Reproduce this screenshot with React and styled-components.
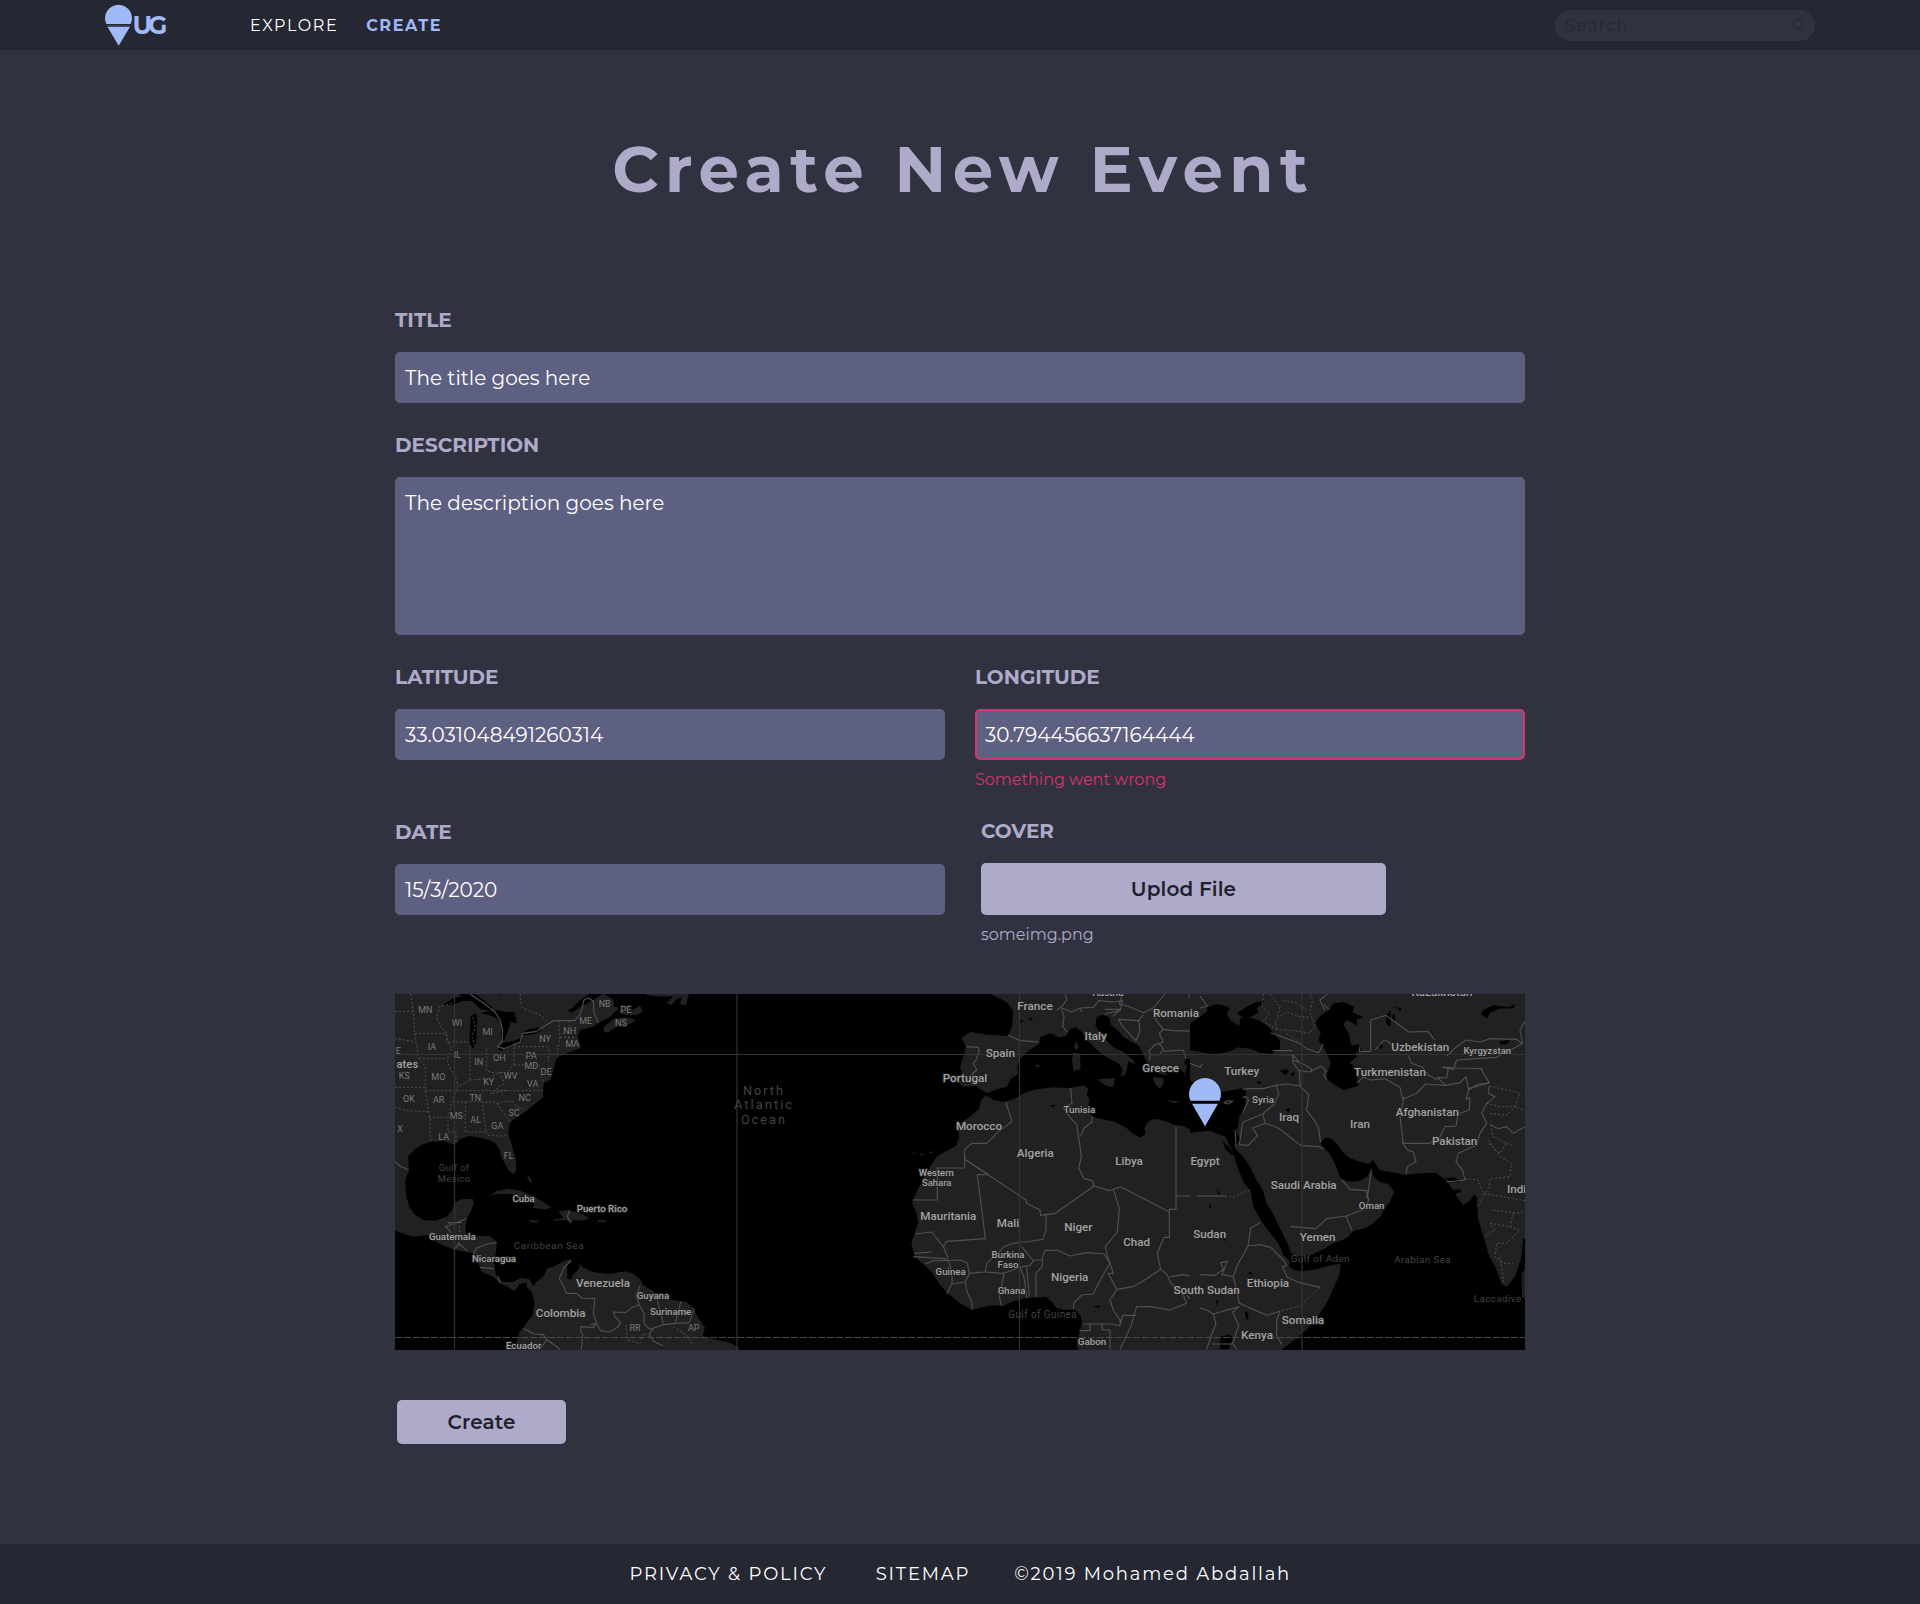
import React from 'react';
import styled, { createGlobalStyle } from 'styled-components';

const GlobalStyle = createGlobalStyle`
  *, *::before, *::after { box-sizing: border-box; }
  body {
    margin: 0;
    background: #31323f;
    font-family: Montserrat, Inter, 'Liberation Sans', sans-serif;
  }
`;

const Page = styled.div`
  display: flex;
  flex-direction: column;
  min-height: 1604px;
  background: #31323f;
`;

const Header = styled.header`
  display: flex;
  align-items: center;
  height: 50px;
  padding: 0 105px;
  background: #252733;
`;

const Brand = styled.a`
  display: flex;
  align-items: center;
  width: 145px;
  height: 50px;
  color: #9fbaf7;
`;

const BrandMark = styled.svg`
  width: 27px;
  height: 42px;
  fill: #9fbaf7;
`;

const BrandName = styled.span`
  margin-left: 0.6px;
  font-size: 25px;
  font-weight: 700;
  letter-spacing: -4.4px;
  line-height: 50px;
`;

const Nav = styled.nav`
  display: flex;
  gap: 28px;
`;

const NavLink = styled.a`
  padding-top: 1px;
  font-size: 16px;
  line-height: 50px;
  letter-spacing: 0.1em;
  font-weight: ${(p) => (p.$active ? 700 : 400)};
  color: ${(p) => (p.$active ? '#9fbaf7' : '#ffffff')};
`;

const SearchBox = styled.div`
  display: flex;
  align-items: center;
  justify-content: space-between;
  width: 260px;
  height: 31px;
  margin-left: auto;
  padding: 0 8px 0 10px;
  border-radius: 16px;
  background: #31323f;
  color: #252733;
`;

const SearchText = styled.span`
  font-size: 16px;
  font-weight: 400;
  letter-spacing: 0.1em;
`;

const SearchIcon = styled.svg`
  width: 15px;
  height: 15px;
  fill: none;
  stroke: #252733;
  stroke-width: 1;
`;

const Main = styled.main`
  width: 1130px;
  margin: 0 auto;
`;

const Title = styled.h1`
  margin: 79px 0 99px;
  padding-left: 6.4px;
  text-align: center;
  font-size: 64px;
  font-weight: 700;
  line-height: 80px;
  letter-spacing: 0.1em;
  color: #aeaaca;
`;

const Form = styled.form`
  display: flex;
  flex-direction: column;
`;

const Field = styled.div`
  display: flex;
  flex-direction: column;
  padding-top: ${(p) => p.$nudge || 0}px;
  padding-left: ${(p) => p.$inset || 0}px;
`;

const FieldBlock = styled(Field)`
  margin-bottom: 30px;
`;

const Row = styled.div`
  display: grid;
  grid-template-columns: 1fr 1fr;
  column-gap: 30px;
`;

const Label = styled.label`
  margin-bottom: 20px;
  font-size: 20px;
  font-weight: 700;
  line-height: 24px;
  color: #aeaaca;
`;

const Input = styled.input`
  width: 100%;
  height: 51px;
  padding: 0 ${(p) => (p.$invalid ? 8 : 10)}px;
  border: ${(p) => (p.$invalid ? '2px solid #d8336b' : '0')};
  border-radius: 5px;
  outline: none;
  background: #5d6080;
  color: #ffffff;
  font-family: inherit;
  font-size: 20px;
`;

const TextArea = styled.textarea`
  display: block;
  width: 100%;
  height: 158px;
  padding: 14px 10px;
  border: 0;
  border-radius: 5px;
  outline: none;
  resize: none;
  background: #5d6080;
  color: #ffffff;
  font-family: inherit;
  font-size: 20px;
  line-height: 24px;
`;

const Hint = styled.span`
  margin-top: 10px;
  font-size: 16px;
  font-weight: 400;
  line-height: 20px;
  color: ${(p) => (p.$error ? '#d8336b' : '#aeaaca')};
`;

const ErrorHint = styled(Hint)`
  margin-bottom: 29px;
`;

const Button = styled.button`
  width: ${(p) => p.$width}px;
  height: ${(p) => p.$height}px;
  padding: 0;
  border: 0;
  border-radius: 5px;
  background: #aeaaca;
  color: #1f1f2b;
  font-family: inherit;
  font-size: 20px;
  font-weight: 600;
  letter-spacing: 0.12px;
`;

const SubmitButton = styled(Button)`
  margin-left: 2px;
`;

const MapFrame = styled.div`
  width: 1130px;
  height: 356px;
  margin: 49px 0 50px;
  overflow: hidden;
  background: #000000;
`;

const MapSvg = styled.svg`
  display: block;
  width: 1130px;
  height: 356px;
  font-family: Roboto, sans-serif;

  .land { fill: #212121; }
  .sea { fill: #000000; }
  .border { fill: none; stroke: #505050; stroke-width: 3.4; stroke-linejoin: round; }
  .state { fill: none; stroke: #505050; stroke-width: 3; stroke-dasharray: 6 6; }
  .grid { fill: none; stroke: #333333; stroke-width: 1.2; }
  .equator { stroke: #484848; stroke-dasharray: 7 2; }
  .pin { fill: #9fbaf7; }
`;

const MapLabel = styled.text`
  font-size: ${(p) => p.$size}px;
  font-weight: ${(p) => (p.$tone === 'country' ? 500 : 400)};
  letter-spacing: ${(p) => p.$track || 0}px;
  text-anchor: middle;
  fill: ${(p) => ({ country: '#a2a2a2', state: '#7a7a7a', water: '#444444' })[p.$tone]};
  stroke: ${(p) => (p.$tone === 'water' ? 'none' : '#212121')};
  stroke-width: 5px;
  paint-order: stroke;
`;

const Footer = styled.footer`
  display: flex;
  align-items: center;
  height: 60px;
  margin-top: 100px;
  padding-left: 629.5px;
  background: #252733;
  color: #ffffff;
  font-size: 18px;
`;

const FooterItem = styled.span`
  margin-right: ${(p) => p.$gap || 0}px;
  letter-spacing: 0.1em;
  line-height: 60px;
  white-space: nowrap;
`;

/* Each region is drafted at three times its size on the page. */
const americas = {
  shift: 'translate(-15 -14) scale(0.33333)',
  land: [
    'M30 30H640L620 48L598 62L580 82L562 92L575 98L600 82L640 60L668 42H672L700 60L702 80L718 84L700 100L690 112L655 128L640 140L600 150L592 170L600 190L602 204L580 212L550 224L530 234L522 262L512 300L492 308L488 330L490 352L462 374L440 392L410 412L390 428L385 460L398 505L408 540L408 575L398 582L385 570L366 535L358 508L345 488L325 480L300 473L268 468L240 478L225 494L190 484L150 486L125 494L105 508L85 528L86 570L76 600L78 645L88 680L102 702L130 720L165 722L200 710L218 690L222 668L245 658L278 656L282 668L274 690L262 714L256 740L258 764L290 768L330 768L350 785L348 815L342 850L348 885L366 905L398 906L425 893L448 898L462 920L466 908L492 888L500 866L530 856L552 842L572 838L576 846L560 856L562 876L576 888L596 868L600 852L608 862L640 876L690 882L735 874L758 880L780 898L790 916L820 934L850 958L880 960L920 966L942 986L952 1010L975 1042L968 1068L1000 1078L1050 1088L1078 1104V1115H400L412 1080L418 1056L440 1030L458 1005L464 965L455 935L442 924L438 908L418 912L404 934L385 922L358 908L340 890L306 876L300 862L290 835L278 820L225 810L180 792L142 766L100 770L45 752H30Z',
    'M712 92L745 96L770 84L780 76L788 94L770 106L735 104Z',
    'M672 140L700 118L735 112L768 120L750 132L715 138L682 158L670 154Z',
    'M330 648L350 632L385 626L420 632L455 646L485 664L514 682L500 688L460 684L462 668L430 652L390 642L350 642Z',
    'M535 694L565 690L600 700L628 714L610 722L580 720L572 732L560 720L520 722L522 718L550 714Z',
    'M446 720L478 722L470 728L450 726Z',
    'M652 720L680 721L674 727L652 726Z',
    'M440 585L450 592L456 610L448 606Z',
    'M800 30H930L918 76L900 72L905 50L890 58L875 74L860 70L880 48L845 50L800 46Z',
  ],
  sea: [
    'M188 76L215 56L245 48L232 38H282L300 52L340 84L330 92L300 86L278 64L250 62L220 74Z',
    'M272 108L288 100L292 120L288 190L280 206L268 192L270 150Z',
    'M300 100L325 94L352 90L376 96L402 96L412 130L392 125L385 150L372 180L362 176L366 140L352 116L325 104Z',
    'M352 204L370 188L398 184L428 172L424 184L392 200L362 212Z',
    'M424 160L440 150L476 142L484 152L462 162L432 166Z',
    'M345 30H372L360 46Z',
    'M562 872L578 876L576 898L562 896Z',
  ],
  border: [
    'M270 42L320 76L345 96L360 120L368 150L366 185L352 200L372 206L420 186L428 160L470 154L490 140L520 122H585L602 100L612 60L625 54L640 64L642 100L656 128',
    'M45 545L60 558L86 570', 'M204 738L228 728L258 716', 'M204 738H196L214 758M206 732V728H244M222 808L238 792L262 812M238 792L232 790M280 820L290 804L322 792L350 788', 'M300 862L342 866', 'M355 890L360 910',
    'M572 842L550 866L538 896L552 920L558 940H590L605 954L645 956L640 1000L650 1030L640 1042L602 1040V1052L608 1064L604 1108',
    'M650 1030L662 1052L688 1056L712 1042L722 1028L705 1010L700 996L736 998L756 982L778 974L768 948L780 918',
    'M778 974L792 1000V1030L810 1048L850 1034L886 1030L928 1028L942 986M850 1034L842 1000L832 962M886 1030L902 966',
    'M432 1046L462 1062L490 1064L502 1080L540 1108M490 1064L500 1080L480 1108', 'M568 692L562 710L572 726',
    'M820 1046L808 1062L820 1084L850 1098M650 1030L632 1034',
  ],
  state: [
    'M92 42L100 95L104 160L116 235L136 262V330L146 395L152 420L148 450L154 486', 'M45 95H98M104 160H198L206 186H270', 'M215 70L180 80L170 110L180 138L198 155L202 185L216 205L200 240L212 270L226 290L234 318L222 350L212 380L204 410V456H228V490', 'M116 235H196M45 176L100 184', 'M45 322H136M136 332H490M220 366H350', 'M45 382L80 392L146 395M146 412H204', 'M270 196V300L234 320M320 206V274L350 280L332 296L270 300M402 190V250L380 280L360 276L350 280',
    'M402 200H500L512 218L502 238L510 250', 'M402 255H478L484 290L490 306M360 276L372 310L330 342L380 330', 'M420 42L425 80L445 92L480 105L500 122M536 122L540 170L530 230M568 122V164L560 200M540 172H590', 'M256 366V456H318L306 366M318 456L324 466L360 468L382 464M350 370L378 410L392 428M350 370L395 362L410 380L436 390', 'M238 738V790M738 1034L742 1080L780 1090L790 1060L808 1070M880 1040L925 1070L938 1094',
    'M278 112L286 140L276 170L284 196',
  ],
};

const africaEurope = {
  shift: 'translate(485 -14) scale(0.33333)',
  land: [
    'M335 30H1000V100L985 108L965 135L948 160L942 190L945 206L960 214L1000 228V470L985 455L960 458L930 448L910 438L885 434L862 426L835 418H818L800 428L794 446L796 462L780 473L756 458L735 440L700 424L660 416L640 410L628 400L622 380L630 362L620 345L626 328L612 316L590 320L565 324L520 322L480 326L440 335L400 358L370 366L340 360L318 346L305 358L296 388L270 410L242 428L234 446L238 474L228 498L205 510L172 528L150 560L128 600L108 640L96 668L110 700L114 730L104 760L94 790L104 830L134 856L155 876L178 912L206 942L240 970L275 990L310 980L340 976L370 978L400 964L440 954L498 950L516 966L530 984L555 990L585 988L602 1008L606 1030L598 1060L590 1090L594 1115H1000V30L940 240L918 236L912 250L922 258L914 285L926 300L910 276L880 256L850 272L866 286L840 282L816 262L800 246L786 216L775 196L756 186L732 172L712 150L692 134L688 112L668 104L650 112L646 136L660 160L688 190L700 202L730 216L760 240L764 252L745 244L742 262L736 284L722 290L728 270L716 250L680 232L650 210L622 180L605 155L586 142L568 150L558 168L535 172L510 160L480 172L478 192L445 212L420 236L412 262L414 282L392 298L380 320L350 328L322 340L304 330L288 318L252 320L240 312L246 280L240 262L250 230L258 200L244 174L270 156L320 164L385 168L396 140L400 92L380 66L335 44Z',
    'M590 182L596 200L590 212L582 200Z', 'M580 216L600 222L602 268L580 272L576 238Z', 'M655 298L705 294L700 322L680 318L658 304Z', 'M818 292L850 294L852 308L840 326L825 312Z', 'M862 360L905 366L880 370Z', 'M465 254L482 256L472 264Z', 'M98 516L108 520L98 522M122 520L134 526L120 526M148 514L160 516L150 522Z',
  ],
  sea: ['M415 120L432 122L420 128Z', 'M445 118L460 112L452 122Z', 'M510 376L528 374L520 382Z', 'M640 980L662 976L656 984Z'],
  border: [
    'M385 166L420 182L476 186', 'M258 200L295 202L298 214L288 240L280 250L290 270L276 282L278 310', 'M530 90L545 80L560 60L556 44M545 84L575 96L600 84L640 82L656 62L700 66L728 62L720 92L674 102', 'M545 88L552 110L548 140L562 156', 'M600 84L606 96M728 42L718 72L748 80L790 98L820 84L840 60L855 42M674 88H720L700 108M715 118L776 122L780 152L768 182L728 140Z', 'M776 122L790 104M820 84L828 120L850 148L838 160L850 186L822 196L806 214L812 224H840L850 206L838 190L820 196M850 148L880 152L950 154M812 224L808 240M850 214L910 210L918 236M925 42L940 80L960 104L975 80L968 42',
    'M572 324L576 370L550 382L568 410L590 434L600 500L604 530L596 564L612 596L638 602L642 618L688 632L722 620L868 696', 'M602 470L612 444L636 426V410', 'M378 366L388 400L396 424L350 460L320 490H276L254 508V538L438 660L440 670L480 690L482 706L526 700L642 618', 'M254 528V564H172M190 564H170M172 564L172 630L172 660H98M254 538L326 584H292L316 776L200 784L190 800L155 756L106 762', 'M498 704V750L488 778L440 786L425 786L400 790L372 800L350 824L320 850L316 876L290 878L268 880L262 850L240 840L205 842L195 836L100 830', 'M190 800L205 836M104 820L156 816M136 852L160 842L205 842L216 876L216 912L200 942M216 912L256 906L268 880M256 906L262 938L276 965V988M365 978L358 950L372 880L316 876M372 880L420 862L450 856L460 842L425 800M420 862L432 890L440 954M440 862L448 950M468 950V880L486 860L488 840L462 840M486 836L495 812L530 810L570 828L620 818L672 822L690 850L672 880L650 920L640 942L605 945L582 968L580 988',
    'M700 628L718 686L712 756L676 800L680 820L700 880H684L710 928L690 960L700 990L720 1020V1038L695 1032H610M710 928L760 920L800 896L842 868L862 884L872 908L910 945L920 970L870 990L810 980L770 980L752 1040L720 1108M720 1036L728 1006H768M842 868L832 820L852 772H868V688H888V440M888 648H1000M872 890L910 884L945 890M955 882L1000 880M920 945L936 962L960 978H1000M630 1032V1052H598M666 1030V1050H690V1108', 'M960 1108L985 1060',
  ],
  state: [],
};

const asia = {
  shift: 'translate(805 -14) scale(0.33333)',
  land: [
    'M-30 30H990V785L970 775L962 840L945 890L920 920L905 912L888 865L868 830L852 775L834 715L830 650L822 644L812 660L790 675L770 650L748 612L725 592L708 578L660 580L620 584L580 578L538 570L520 540L505 552L480 545L450 535L430 518L408 488L395 476L375 474L360 488L372 505L388 518L402 545L412 570L424 598L450 605L480 602L500 590L514 570L520 590L540 606L565 612L583 635L570 665L548 692L545 706L520 730L498 745L460 752L440 775L400 790L370 808L335 824L290 830L272 818L262 790L235 735L218 700L200 670L188 630L165 592L150 560L125 524L112 514L104 502L122 480L108 452L84 456L60 448L30 452L-30 462Z',
    'M-30 445L30 452L76 470L100 520L112 560L130 605L152 634L160 680L186 725L205 752L235 790L250 825L272 846L265 858L282 870L310 874L355 866L400 854L422 852L418 886L400 925L380 970L340 1030L290 1075L256 1100L240 1115H-30Z',
    'M965 880L980 860V960L966 950Z',
  ],
  sea: [
    'M-30 130L0 110L20 95L22 82L50 72L70 76L90 84L80 98L90 120L118 138L120 116L145 112L175 120L205 140L222 160L240 180V208L215 222L180 218L150 206L115 202L90 214L50 222L20 220L-30 210Z',
    'M110 100L140 80L170 66L196 64L170 84L175 98L150 112L130 114Z',
    'M345 130L360 108L385 92L402 70L430 66L462 80L458 98L490 112L470 118L472 136L440 120L430 134L448 162L452 190L470 230L448 250L466 260L476 318L430 330L400 312L380 296L382 280L392 250L380 218L356 180L362 158Z',
    'M445 200L475 192L486 212L460 222Z',
    'M842 102L850 90L880 76L925 82L945 72L942 84L900 86L870 98L862 116Z', 'M898 184L930 180L922 192L902 194Z', 'M560 106L572 90V138L558 132ZM576 110L584 98V134ZM586 80L606 86L600 94ZM536 190L550 198L540 208Z',
    'M66 335L90 332L126 325L138 330L136 372L130 395L118 410L112 448L84 456L60 448L30 452L-30 458V300L10 322L40 312Z',
    'M68 484L86 500L104 526L96 526L76 508Z',
    'M60 1070L90 1064L98 1075L86 1108H60Z', 'M730 596L760 592L780 600L776 608L750 602Z', 'M754 630L780 628L784 636L764 642Z',
    'M240 274L252 268L268 272L256 286ZM270 282L284 276L280 290ZM168 304L186 306L176 312ZM256 388L270 384L266 398ZM144 878L152 876L160 884L148 882ZM134 996L142 994L146 1014L140 1020ZM48 962L54 960L52 982Z',
    'M52 630L60 640L54 644ZM26 674L34 678L30 688ZM70 778L78 776L76 784Z',
  ],
  border: [
    'M-30 250L0 262L8 250', 'M0 48L22 78L0 84', 'M72 368L84 362L98 364L84 372Z', 'M128 328L150 326L190 326L228 316L258 312L300 318L298 272L280 250L278 224H240', 'M228 316L236 340L225 370L188 402L130 426M128 352L138 350L146 360L128 400', 'M188 402L196 430L174 438L158 444L172 466L145 496L118 494L128 426M106 452L108 500', 'M196 430L235 444L302 496L358 500L372 508M300 318L326 344L322 380L318 388L345 424L356 446L362 488', 'M298 272L330 276L362 258L378 272L372 286L380 300M278 240L310 252L336 268L330 276M212 158L250 172L298 190L320 206L356 218L370 192M218 212H278M278 224L300 250', 'M374 90L360 60L382 42M372 74L386 88',
    'M470 308L490 292L512 300L556 296L600 322L608 358L650 340L676 312L738 316L712 292L740 294L745 262L728 262M512 214V120L558 106L626 156L684 154L704 180M512 214H478L480 200M526 210L552 180L568 186L575 200M626 226L634 250L668 262L684 284L712 300', 'M738 316L780 308L798 290L806 330L798 358L810 352L808 390L774 402L768 438L735 440L720 470L690 490H610L600 410L612 350M606 486L622 510L640 516L648 545L622 560L618 582', 'M740 228L770 200L798 180L840 186L870 176L950 178L968 192L960 150L975 124M728 262L760 268L770 240L830 236L890 232L966 192M744 262L770 264L845 266L850 280L868 308L806 326', 'M868 310L835 312L806 330M868 318L865 340L885 350L860 370L845 400L860 430L840 460L830 495L775 520L768 545L788 572L795 600L740 606', 'M975 440L940 460L920 440L895 446L872 434',
    'M424 598L450 628L500 632L502 655L514 568M500 632L506 660L496 686L438 708L380 716L348 746L272 740M438 708L456 752', 'M180 728L152 744L144 798L112 856L100 890L66 884L82 844L62 848L70 868L45 886L0 884M144 798L180 794L212 802L250 840L260 856L248 860L262 892L298 908L360 922', 'M100 890L118 970L145 982L200 1006L240 994L230 1020V1070L246 1094M0 984L20 990L40 1002L118 980M118 980L98 996L116 1036L98 1090L110 1108M40 1002L48 1032L36 1060L20 1108M36 1092H98', 'M-10 648H75',
  ],
  state: [
    'M190 42L186 80L210 100L190 124L230 148L280 152L330 160L346 140L330 96L338 60L330 42M230 148L226 120L260 96L300 110L335 112M212 42L240 80L232 110M260 160L300 188M250 60L290 70L320 90', 'M75 648L100 650L150 630M360 922L300 978L240 994', 'M868 318L920 330L960 340L945 380L975 392M860 370L900 380L945 380M870 400L920 406L945 380M872 434L880 470L920 490L900 520L865 490M920 490L945 500M865 480L900 530L935 550L930 590L870 596L868 620L850 650L834 680M795 596L834 600L850 640L975 662M880 690L960 700L975 690M940 700L930 740L870 730L885 750L850 772M930 740L960 750L920 790H890L885 830L910 850L940 850M900 830L912 912',
  ],
};

/* [x, y, text, size, tone, tracking] */
const americaLabels = [
  [136, 99, 'MN', 27, 'state'], [231, 138, 'WI', 27, 'state'], [323, 164, 'MI', 27, 'state'], [156, 210, 'IA', 27, 'state'],
  [232, 234, 'IL', 27, 'state'], [296, 254, 'IN', 27, 'state'], [358, 244, 'OH', 27, 'state'], [454, 237, 'PA', 27, 'state'],
  [454, 267, 'MD', 27, 'state'], [498, 284, 'DE', 27, 'state'], [392, 297, 'WV', 27, 'state'], [458, 322, 'VA', 27, 'state'],
  [326, 315, 'KY', 27, 'state'], [286, 362, 'TN', 27, 'state'], [434, 363, 'NC', 27, 'state'], [402, 409, 'SC', 27, 'state'],
  [352, 446, 'GA', 27, 'state'], [287, 430, 'AL', 27, 'state'], [229, 417, 'MS', 27, 'state'], [191, 481, 'LA', 27, 'state'],
  [176, 370, 'AR', 27, 'state'], [175, 301, 'MO', 27, 'state'], [73, 297, 'KS', 27, 'state'], [87, 366, 'OK', 27, 'state'],
  [60, 456, 'X', 27, 'state'], [55, 221, 'E', 27, 'state'], [386, 537, 'FL', 27, 'state'], [495, 185, 'NY', 27, 'state'],
  [569, 163, 'NH', 27, 'state'], [577, 202, 'MA', 27, 'state'], [617, 132, 'ME', 27, 'state'], [674, 80, 'NB', 27, 'state'],
  [738, 99, 'PE', 27, 'state'], [723, 138, 'NS', 27, 'state'], [765, 1052, 'RR', 27, 'state'], [941, 1053, 'AP', 27, 'state'],
  [82, 265, 'ates', 34, 'country'], [431, 665, 'Cuba', 29, 'country'], [666, 697, 'Puerto Rico', 29, 'country'],
  [217, 779, 'Guatemala', 29, 'country'], [342, 845, 'Nicaragua', 29, 'country'], [669, 920, 'Venezuela', 35, 'country'],
  [819, 958, 'Guyana', 29, 'country'], [872, 1004, 'Suriname', 29, 'country'], [542, 1011, 'Colombia', 35, 'country'],
  [431, 1106, 'Ecuador', 29, 'country'], [222, 574, 'Gulf of', 29, 'water', 0.8], [222, 606, 'Mexico', 29, 'water', 0.8],
  [507, 806, 'Caribbean Sea', 29.5, 'water', 1.6],
  [1152, 345, 'North', 38, 'water', 6], [1152, 388, 'Atlantic', 39, 'water', 6], [1152, 431, 'Ocean', 38, 'water', 6],
];

const africaLabels = [
  [465, 89, 'France', 35], [684, 47, 'Austria', 29], [888, 111, 'Romania', 35], [647, 179, 'Italy', 35], [361, 232, 'Spain', 35],
  [842, 275, 'Greece', 35], [255, 305, 'Portugal', 35], [598, 398, 'Tunisia', 29.5], [297, 450, 'Morocco', 35], [466, 531, 'Algeria', 35],
  [747, 555, 'Libya', 35], [169, 588, 'Western', 28.5], [170, 617, 'Sahara', 28.5], [205, 720, 'Mauritania', 35], [384, 742, 'Mali', 35],
  [595, 752, 'Niger', 35], [770, 799, 'Chad', 35], [384, 834, 'Burkina', 29], [384, 863, 'Faso', 29], [212, 885, 'Guinea', 29],
  [569, 904, 'Nigeria', 35], [395, 943, 'Ghana', 29], [636, 1096, 'Gabon', 29.5],
  [488, 1013, 'Gulf of Guinea', 30, 'water', 1.2],
];

const asiaLabels = [
  [15, 555, 'Egypt', 35], [29, 774, 'Sudan', 35], [20, 942, 'South Sudan', 35], [726, 48, 'Kazakhstan', 35],
  [125, 286, 'Turkey', 35], [189, 370, 'Syria', 29.5], [267, 424, 'Iraq', 35], [480, 445, 'Iran', 35], [661, 212, 'Uzbekistan', 35],
  [862, 222, 'Kyrgyzstan', 29], [570, 287, 'Turkmenistan', 35], [682, 407, 'Afghanistan', 35], [764, 494, 'Pakistan', 35],
  [311, 627, 'Saudi Arabia', 35], [515, 686, 'Oman', 29], [353, 783, 'Yemen', 35], [204, 922, 'Ethiopia', 35],
  [309, 1031, 'Somalia', 35], [171, 1076, 'Kenya', 35], [950, 640, 'Indi', 35],
  [361, 845, 'Gulf of Aden', 29.5, 'water', 1.2], [668, 850, 'Arabian Sea', 29.5, 'water', 1.2], [893, 965, 'Laccadive', 29.5, 'water', 1.2],
];

function Region({ region }) {
  return (
    <g transform={region.shift}>
      {region.land.map((d) => <path key={d} className="land" d={d} />)}
      {region.sea.map((d) => <path key={d} className="sea" d={d} />)}
      {region.border.map((d) => <path key={d} className="border" d={d} />)}
      {region.state.map((d) => <path key={d} className="state" d={d} />)}
    </g>
  );
}

function Labels({ shift, items }) {
  return (
    <g transform={shift}>
      {items.map(([x, y, text, size, tone = 'country', track]) => (
        <MapLabel key={text} x={x} y={y} $size={size} $tone={tone} $track={track}>{text}</MapLabel>
      ))}
    </g>
  );
}

function WorldMap() {
  return (
    <MapSvg viewBox="0 0 1130 356">
      <Region region={africaEurope} />
      <Region region={asia} />
      <Region region={americas} />
      <path className="grid" d="M59.5 0V356M342 0V356M624.5 0V356M907 0V356M0 60.5H1130" />
      <path className="grid equator" d="M0 343.5H1130" />
      <Labels shift={americas.shift} items={americaLabels} />
      <Labels shift={africaEurope.shift} items={africaLabels} />
      <Labels shift={asia.shift} items={asiaLabels} />
      <path className="pin" d="M795.5 106.8A16 16 0 1 1 824.5 106.8ZM797 109.7H823L810 132.2Z" />
    </MapSvg>
  );
}

export default function App() {
  return (
    <Page>
      <GlobalStyle />
      <Header>
        <Brand>
          <BrandMark viewBox="0 0 27 42">
            <path d="M1.3 20A13.5 13.5 0 1 1 25.7 20Z" />
            <path d="M1.8 21.1H25.2V21.6H1.8Z" opacity="0.35" />
            <path d="M2.4 22.8H25L13.7 41.8Z" />
          </BrandMark>
          <BrandName>UG</BrandName>
        </Brand>
        <Nav>
          <NavLink>EXPLORE</NavLink>
          <NavLink $active>CREATE</NavLink>
        </Nav>
        <SearchBox>
          <SearchText>Search</SearchText>
          <SearchIcon viewBox="0 0 15 15">
            <circle cx="6" cy="6" r="4.7" />
            <path d="M9.4 9.4L14 14" />
          </SearchIcon>
        </SearchBox>
      </Header>
      <Main>
        <Title>Create New Event</Title>
        <Form>
          <FieldBlock>
            <Label>TITLE</Label>
            <Input defaultValue="The title goes here" />
          </FieldBlock>
          <FieldBlock>
            <Label>DESCRIPTION</Label>
            <TextArea defaultValue="The description goes here" />
          </FieldBlock>
          <Row>
            <Field>
              <Label>LATITUDE</Label>
              <Input defaultValue="33.031048491260314" />
            </Field>
            <Field>
              <Label>LONGITUDE</Label>
              <Input $invalid defaultValue="30.794456637164444" />
              <ErrorHint $error>Something went wrong</ErrorHint>
            </Field>
          </Row>
          <Row>
            <Field $nudge={1}>
              <Label>DATE</Label>
              <Input defaultValue="15/3/2020" />
            </Field>
            <Field $inset={6}>
              <Label>COVER</Label>
              <Button type="button" $width={405} $height={52}>Uplod File</Button>
              <Hint>someimg.png</Hint>
            </Field>
          </Row>
          <MapFrame>
            <WorldMap />
          </MapFrame>
          <SubmitButton type="button" $width={169} $height={44}>Create</SubmitButton>
        </Form>
      </Main>
      <Footer>
        <FooterItem $gap={48.5}>PRIVACY &amp; POLICY</FooterItem>
        <FooterItem $gap={44}>SITEMAP</FooterItem>
        <FooterItem>©2019 Mohamed Abdallah</FooterItem>
      </Footer>
    </Page>
  );
}
